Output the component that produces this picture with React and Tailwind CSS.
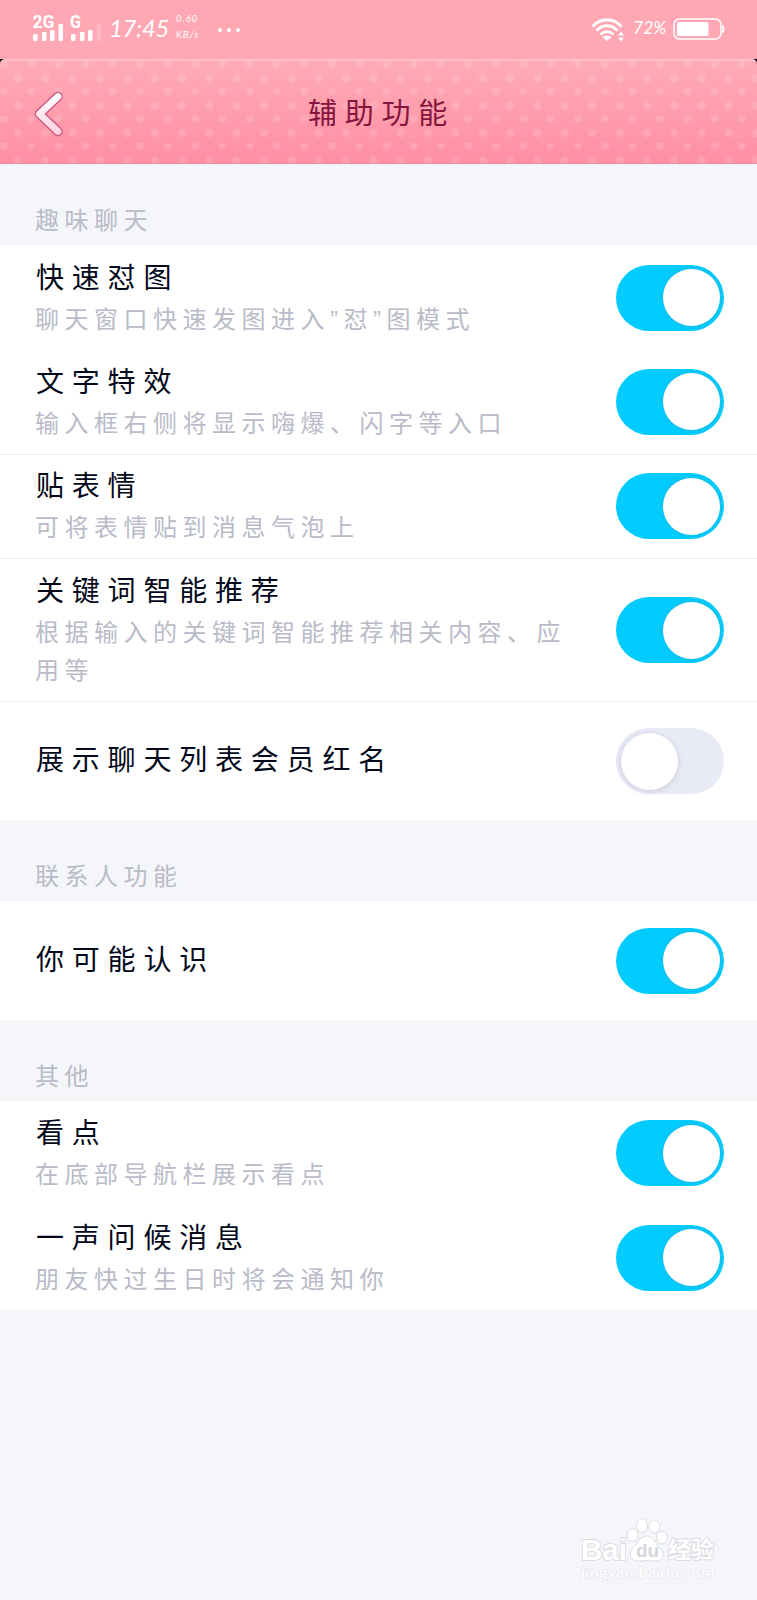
import React, { useState } from 'react';

const sections = [
  {
    title: '趣味聊天',
    items: [
      { id: 'image', title: '快速怼图', desc: '聊天窗口快速发图进入”怼”图模式', on: true },
      { id: 'effect', title: '文字特效', desc: '输入框右侧将显示嗨爆、闪字等入口', on: true, divider: true },
      { id: 'sticker', title: '贴表情', desc: '可将表情贴到消息气泡上', on: true, divider: true },
      { id: 'keyword', title: '关键词智能推荐', desc: '根据输入的关键词智能推荐相关内容、应用等', on: true, divider: true, tall: true },
      { id: 'redname', title: '展示聊天列表会员红名', on: false }
    ]
  },
  {
    title: '联系人功能',
    items: [{ id: 'maybe', title: '你可能认识', on: true }]
  },
  {
    title: '其他',
    items: [
      { id: 'kandian', title: '看点', desc: '在底部导航栏展示看点', on: true },
      { id: 'greeting', title: '一声问候消息', desc: '朋友快过生日时将会通知你', on: true }
    ]
  }
];

const SignalIcons = () => (
  <svg width="70" height="34" viewBox="0 -7 70 34" fill="#fff">
    <text x="-0.5" y="13" fontFamily="Roboto, sans-serif" fontWeight="700" fontSize="17.5">2G</text>
    <text x="37" y="13" fontFamily="Roboto, sans-serif" fontWeight="700" fontSize="17.5" textLength="11" lengthAdjust="spacingAndGlyphs">G</text>
    <rect x="0" y="19" width="4.5" height="7" rx="1.2" />
    <rect x="9" y="17" width="4.5" height="9" rx="1.2" />
    <rect x="17" y="15" width="4.5" height="11" rx="1.2" />
    <rect x="25.5" y="9" width="4.5" height="17" rx="1.2" />
    <rect x="38" y="19" width="4.5" height="7" rx="1.2" />
    <rect x="47" y="17" width="4.5" height="9" rx="1.2" />
    <rect x="55" y="15" width="4.5" height="11" rx="1.2" />
    <rect x="63.5" y="9" width="4.5" height="17" rx="1.2" opacity="0.2" />
  </svg>
);

const WifiIcon = () => (
  <svg width="34" height="26" viewBox="0 0 34 26" fill="none" stroke="#fff">
    <path d="M1.5 9.5C10 .5 22 .5 30.500 9.500" strokeWidth="3" />
    <path d="M5.500 13.500C12 7 20 7 26.500 13.500" strokeWidth="3" />
    <path d="M9.500 17.500C14 13.500 18 13.500 22.500 17.500" strokeWidth="2.800" />
    <path d="M11.500 20Q16 17 20.500 20L16 24Z" fill="#fff" stroke="none" />
    <path d="M30 14.500l3 4h-6zM30 24.500l3-4h-6z" fill="#fff" stroke="none" />
  </svg>
);

const BatteryIcon = () => (
  <svg width="52" height="22" viewBox="0 0 52 22" fill="none">
    <rect x="1" y="1" width="47" height="20" rx="5.500" stroke="#fff" strokeWidth="1.500" />
    <rect x="4" y="4" width="31.500" height="14" rx="1.500" fill="#fff" />
    <path d="M49.500 7.500q2 3.500 0 7" stroke="#fff" strokeWidth="2" />
  </svg>
);

const StatusBar = () => (
  <div className="flex h-[59px] items-start bg-[#ffa8b4] pl-[33px] font-['Lato',sans-serif] text-white">
    <div className="mt-[8px] w-[76px]"><SignalIcons /></div>
    <span className="mt-[13px] w-[67px] text-[24px] leading-[30px] tracking-[-0.3px] italic">17:45</span>
    <div className="mt-[11px] w-[42px] text-[9.500px] leading-[16px] tracking-[1px] italic">
      <div>0.60</div>
      <div>KB/s</div>
    </div>
    <div className="mt-[28px] flex gap-[5px]">
      <i className="h-1 w-1 rounded-full bg-white" />
      <i className="h-1 w-1 rounded-full bg-white" />
      <i className="h-1 w-1 rounded-full bg-white" />
    </div>
    <div className="mt-[17px] mr-[32px] ml-auto flex items-start">
      <div className="w-[42px]"><WifiIcon /></div>
      <span className="-mt-[1px] w-[40px] text-[17.500px] leading-[24px] italic">72%</span>
      <div className="mt-[1px]"><BatteryIcon /></div>
    </div>
  </div>
);

const Header = () => (
  <div className="bg-black">
    <header className="grid h-[105px] grid-cols-[80px_1fr_80px] items-center rounded-t-[5px] border-t-2 border-b border-t-[#ffc1c9] border-b-[#f3899c] bg-[radial-gradient(circle_at_3.500px_2.500px,#ffffff22_0_3.600px,transparent_4.800px),radial-gradient(circle_at_18px_17.500px,#ffffff22_0_3.600px,transparent_4.800px),linear-gradient(#ffabb6,#ff8fa3)] bg-[size:27.350px_27.350px,27.350px_27.350px,100%_100%]">
      <button type="button" aria-label="返回" className="pt-[4px] pl-[34px]">
        <svg width="30" height="48" viewBox="0 0 30 48" fill="none" strokeLinecap="round" strokeLinejoin="round">
          <path d="M24 6.500L5.500 24L24 41.500" stroke="#c9587c" strokeWidth="9.500" />
          <path d="M24 6.500L5.500 24L24 41.500" stroke="url(#arrow)" strokeWidth="6.800" />
          <defs>
            <linearGradient id="arrow" x1="0" y1="0" x2="0" y2="1">
              <stop offset="0" stopColor="#fff" />
              <stop offset="1" stopColor="#ffd3e2" />
            </linearGradient>
          </defs>
        </svg>
      </button>
      <h1 className="pt-[3px] pl-[6px] text-center text-[29px] leading-[40px] tracking-[7.700px] text-[#87143c]">辅助功能</h1>
    </header>
  </div>
);

const Toggle = ({ on, onClick, label }) => (
  <button
    type="button"
    role="switch"
    aria-checked={on}
    aria-label={label}
    onClick={onClick}
    className={`flex h-[66px] w-[108px] shrink-0 items-center rounded-full px-[4.500px] ${on ? 'justify-end bg-[#00ccff]' : 'justify-start bg-[#e8eaf6]'}`}
  >
    <span className={`h-[57px] w-[57px] rounded-full bg-white ${on ? 'shadow-[0_0_3px_1px_#3b9fbe66]' : 'shadow-[0_1px_4px_1px_#b9bbcc80]'}`} />
  </button>
);

const Row = ({ item, on, onToggle }) => {
  const height = item.tall ? 'h-[143px]' : item.desc ? 'h-[104.500px]' : 'h-[118px]';
  return (
    <div className={`flex items-center justify-between bg-white pr-[33px] pl-[36px] ${height} ${item.divider ? 'border-b border-[#eceef1]' : ''}`}>
      <div className="w-[536px]">
        <h3 className="text-[28px] leading-[44px] tracking-[7.800px] text-[#03081a]">{item.title}</h3>
        {item.desc && (
          <p className="-ml-px text-[24px] leading-[38.500px] tracking-[5.500px] text-[#b9bbc8]">{item.desc}</p>
        )}
      </div>
      <Toggle on={on} onClick={onToggle} label={item.title} />
    </div>
  );
};

const Watermark = () => (
  <div className="absolute right-[38px] bottom-[10px] w-[138px] text-white">
    <svg width="138" height="72" viewBox="0 -1 138 72" fill="#fff" stroke="#dcdde3" strokeWidth="1">
      <g fontFamily="Liberation Sans, sans-serif" fontWeight="700" paintOrder="stroke" strokeWidth="2">
        <text x="0" y="41" fontSize="30" textLength="46" lengthAdjust="spacingAndGlyphs">Bai</text>
        <text x="87" y="39" fontSize="23" fontFamily="Noto Sans CJK SC, sans-serif">经验</text>
      </g>
      <ellipse cx="51.500" cy="16" rx="5.500" ry="6.500" />
      <ellipse cx="61" cy="6.500" rx="5.500" ry="7" />
      <ellipse cx="73.500" cy="7.500" rx="5.500" ry="6.500" />
      <ellipse cx="81" cy="18.500" rx="5.500" ry="6.500" />
      <path d="M66 17c-8 0-9 8-14 12-5 5-3 12 4 13 4 .5 6-.5 10-.5s6 1 10 .5c7-1 8-8 3-13-5-4-5-12-13-12Z" />
      <text x="55" y="38" fontSize="19" fontFamily="Liberation Sans, sans-serif" fontWeight="700" fill="#d5d6dd" stroke="none">du</text>
      <text x="0" y="59" fontSize="14" fontFamily="Open Sans, sans-serif" fontWeight="600" paintOrder="stroke" stroke="#e2e3e9" textLength="134" lengthAdjust="spacingAndGlyphs">jingyan.baidu.com</text>
    </svg>
  </div>
);

const App = () => {
  const [enabled, setEnabled] = useState(() =>
    Object.fromEntries(sections.flatMap((s) => s.items).map((item) => [item.id, item.on]))
  );

  const toggle = (id) => setEnabled((prev) => ({ ...prev, [id]: !prev[id] }));

  return (
    <div className="relative h-[1600px] w-[757px] overflow-hidden bg-[#f4f6fa] font-['Liberation_Sans','Noto_Sans_CJK_SC',sans-serif]">
      <StatusBar />
      <Header />

      {sections.map((section) => (
        <section key={section.title}>
          <h2 className="h-[81.500px] pt-[38px] pl-[35px] text-[24px] leading-[38px] tracking-[5.500px] text-[#b9bbc8]">
            {section.title}
          </h2>
          {section.items.map((item) => (
            <Row key={item.id} item={item} on={enabled[item.id]} onToggle={() => toggle(item.id)} />
          ))}
        </section>
      ))}

      <Watermark />
    </div>
  );
};

export default App;
